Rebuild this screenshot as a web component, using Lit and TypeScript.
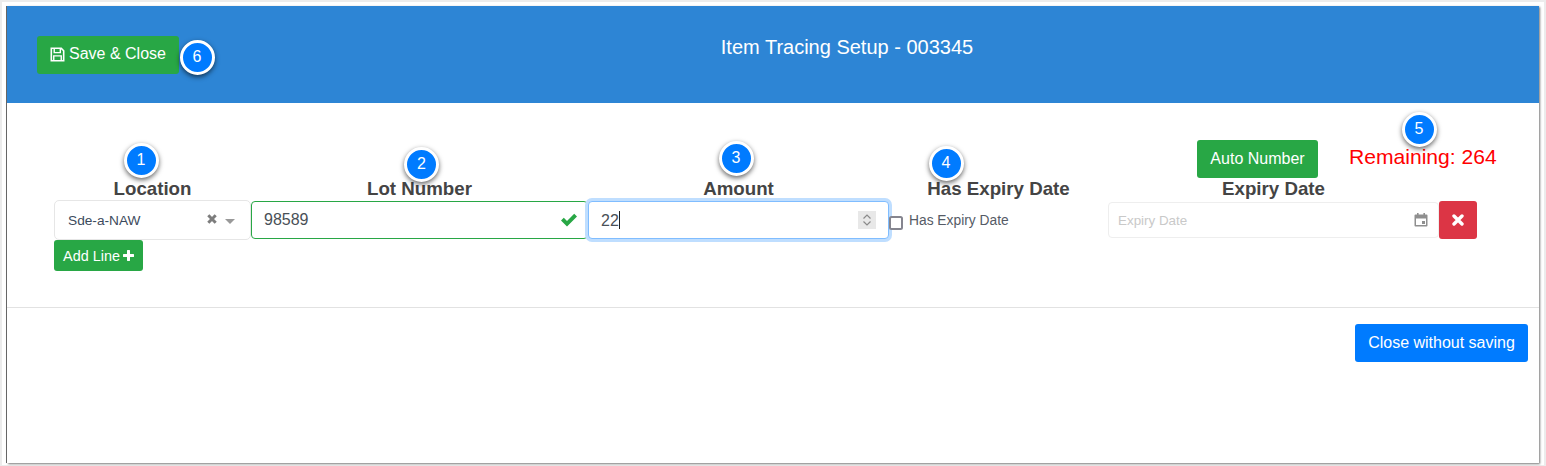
import { LitElement, html, css, svg } from "lit";
import { customElement } from "lit/decorators.js";

const check = svg`<path d="M1 9.5 L3.8 6.7 L7 9.9 L14.2 2.7 L17 5.5 L7 15.5 Z" fill="#28a745"/>`;

@customElement("app-root")
export class AppRoot extends LitElement {
  static styles = css`
    :host { display: block; width: 1546px; height: 466px; font-family: "Liberation Sans", Arial, sans-serif; color: #495057; background: #fff; overflow: hidden; }
    .shot { position: relative; box-sizing: border-box; width: 1546px; height: 466px; padding: 4px 5px 2px 5px; background: #fff; border: 2px solid #ececec; border-bottom-width: 1px; }
    .win { position: relative; box-sizing: border-box; width: 1532px; height: 457px; background: #fff; box-shadow: -1px 0 0 #666, 1px 1px 2px #777; display: flex; flex-direction: column; }
    .head { height: 97px; flex: none; background: #2d85d5; position: relative; display: flex; justify-content: center; }
    .title { color: #fff; font-size: 20px; line-height: 22px; margin-top: 30px; padding-left: 148px; }
    .btn { box-sizing: border-box; border-radius: 3px; color: #fff; display: flex; align-items: center; justify-content: center; white-space: nowrap; }
    .green { background: #28a745; }
    .save { position: absolute; left: 30px; top: 30px; width: 142px; height: 38px; font-size: 16px; gap: 4px; padding-bottom: 2px; }
    .save svg { width: 15px; height: 15px; }
    .body { height: 205px; flex: none; border-bottom: 1px solid #e2e2e2; position: relative; box-sizing: border-box; padding: 82px 0 0 47px; }
    .row { display: flex; align-items: flex-start; }
    .col { display: flex; flex-direction: column; flex: none; }
    .lab { font-weight: 700; font-size: 18.72px; line-height: 20px; height: 12px; color: #444; text-align: center; white-space: nowrap; position: relative; top: -6px; }
    .ctl { box-sizing: border-box; height: 38px; margin-top: 4px; background: #fff; display: flex; align-items: center; }
    .sel { width: 197px; height: 40px; margin-top: 3px; border: 1px solid #e6e6e6; border-radius: 5px; padding: 0 13px; font-size: 13.7px; color: #3c4a5c; justify-content: space-between; }
    .tools { display: flex; align-items: center; gap: 8px; margin-right: 2px; }
    .tools svg { margin-top: -2px; }
    .arrow { width: 0; height: 0; border-left: 5px solid transparent; border-right: 5px solid transparent; border-top: 5px solid #999; margin-top: 3px; }
    .lot { width: 337px; border: 1px solid #28a745; border-radius: 4px; padding: 0 9px 0 12px; font-size: 16px; justify-content: space-between; }
    .amt { width: 301px; border: 1px solid #80bdff; border-radius: 4px; box-shadow: 0 0 0 3px #bfdeff; padding: 0 12px; font-size: 16px; justify-content: space-between; position: relative; z-index: 1; }
    .caret { display: inline-block; width: 1px; height: 18px; background: #222; vertical-align: -3px; }
    .spin { width: 18px; height: 18px; background: #e8e8e8; }
    .spin svg { display: block; }
    .chk { width: 219px; height: 38px; margin-top: 4px; display: flex; align-items: center; font-size: 13.8px; gap: 6px; color: #555b66; position: relative; z-index: 2; }
    .box { box-sizing: border-box; width: 14px; height: 14px; border: 2px solid #85858f; border-radius: 2.5px; margin-top: 5px; background: #fff; flex: none; }
    .date { width: 331px; height: 36px; margin-top: 5px; border: 1px solid #eee; border-radius: 4px; padding: 0 9px 0 9px; font-size: 13.4px; color: #c9c9c9; justify-content: space-between; }
    .del { width: 38px; height: 38px; margin-top: 16px; background: #dc3545; }
    .add { width: 89px; height: 31px; margin-top: 0; font-size: 14.4px; gap: 3px; }
    .auto { position: absolute; left: 1190px; top: 37px; width: 121px; height: 38px; font-size: 16px; }
    .rem { position: absolute; left: 1342px; top: 41px; color: #f00; font-size: 21.1px; line-height: 26px; white-space: nowrap; }
    .foot { display: flex; justify-content: flex-end; padding: 16px 11px 0 0; }
    .close { width: 173px; height: 38px; background: #007bff; font-size: 16px; }
    .pin { position: absolute; box-sizing: border-box; width: 35px; height: 35px; border-radius: 50%; background: #007bff; border: 3px solid #fff; box-shadow: 0 2px 5px rgba(0,0,0,.6); color: #fff; font-size: 16px; display: flex; align-items: center; justify-content: center; z-index: 5; }
  `;

  private pin(n: number, x: number, y: number) {
    return html`<div class="pin" style="left:${x - 7 - 17.5}px;top:${y - 6 - 17.5}px">${n}</div>`;
  }

  render() {
    return html`<div class="shot"><div class="win">
      <div class="head">
        <div class="btn green save">
          <svg viewBox="0 0 16 16"><path fill="none" stroke="#fff" stroke-width="1.7" d="M1.4 1.4h10.6l2.6 2.6v10.6H1.4z"/><path fill="none" stroke="#fff" stroke-width="1.5" d="M4.5 2v4h6.5V2M4 14V9.5h8V14"/></svg>
          <span>Save &amp; Close</span>
        </div>
        <div class="title">Item Tracing Setup - 003345</div>
      </div>
      <div class="body">
        <div class="btn green auto">Auto Number</div>
        <div class="rem">Remaining: 264</div>
        <div class="row">
          <div class="col"><div class="lab">Location</div>
            <div class="ctl sel"><span>Sde-a-NAW</span>
              <span class="tools">
                <svg width="10" height="10" viewBox="0 0 10 10"><path d="M1.3 1.3l7.4 7.4M8.7 1.3l-7.4 7.4" stroke="#7d7d7d" stroke-width="3"/></svg>
                <span class="arrow"></span>
              </span>
            </div>
          </div>
          <div class="col"><div class="lab">Lot Number</div>
            <div class="ctl lot"><span>98589</span><svg width="18" height="18" viewBox="0 0 18 18">${check}</svg></div>
          </div>
          <div class="col"><div class="lab">Amount</div>
            <div class="ctl amt"><span>22<i class="caret"></i></span>
              <span class="spin"><svg width="18" height="18" viewBox="0 0 18 18"><path fill="none" stroke="#8a8a8a" stroke-width="1.2" d="M5.5 7.5L9 4l3.5 3.5M5.5 10.5L9 14l3.5-3.5"/></svg></span>
            </div>
          </div>
          <div class="col"><div class="lab">Has Expiry Date</div>
            <div class="chk"><i class="box"></i><span>Has Expiry Date</span></div>
          </div>
          <div class="col"><div class="lab">Expiry Date</div>
            <div class="ctl date"><span>Expiry Date</span>
              <svg width="16" height="16" viewBox="0 0 16 16"><path fill="#8f8f8f" fill-rule="evenodd" d="M2.5 2.5H4V1h1.6v1.5h4.8V1H12v1.5h1.5A1 1 0 0 1 14.5 3.5v10a1 1 0 0 1-1 1h-11a1 1 0 0 1-1-1v-10a1 1 0 0 1 1-1zM3 6.5V13h10V6.5zM9 9h3v3H9z"/></svg>
            </div>
          </div>
          <div class="btn del"><svg width="12" height="12" viewBox="0 0 12 12"><path d="M2 2l8 8M10 2l-8 8" stroke="#fff" stroke-width="3.4" stroke-linecap="round"/></svg></div>
        </div>
        <div class="btn green add"><span>Add Line</span><svg width="11" height="11" viewBox="0 0 11 11"><path d="M5.5 1v9M1 5.5h9" stroke="#fff" stroke-width="3" stroke-linecap="round"/></svg></div>
      </div>
      <div class="foot"><div class="btn close">Close without saving</div></div>
      ${this.pin(1, 141, 160)}${this.pin(2, 421.5, 164)}${this.pin(3, 736, 158)}
      ${this.pin(4, 946, 163)}${this.pin(5, 1419, 129)}${this.pin(6, 197, 57)}
    </div></div>`;
  }
}
